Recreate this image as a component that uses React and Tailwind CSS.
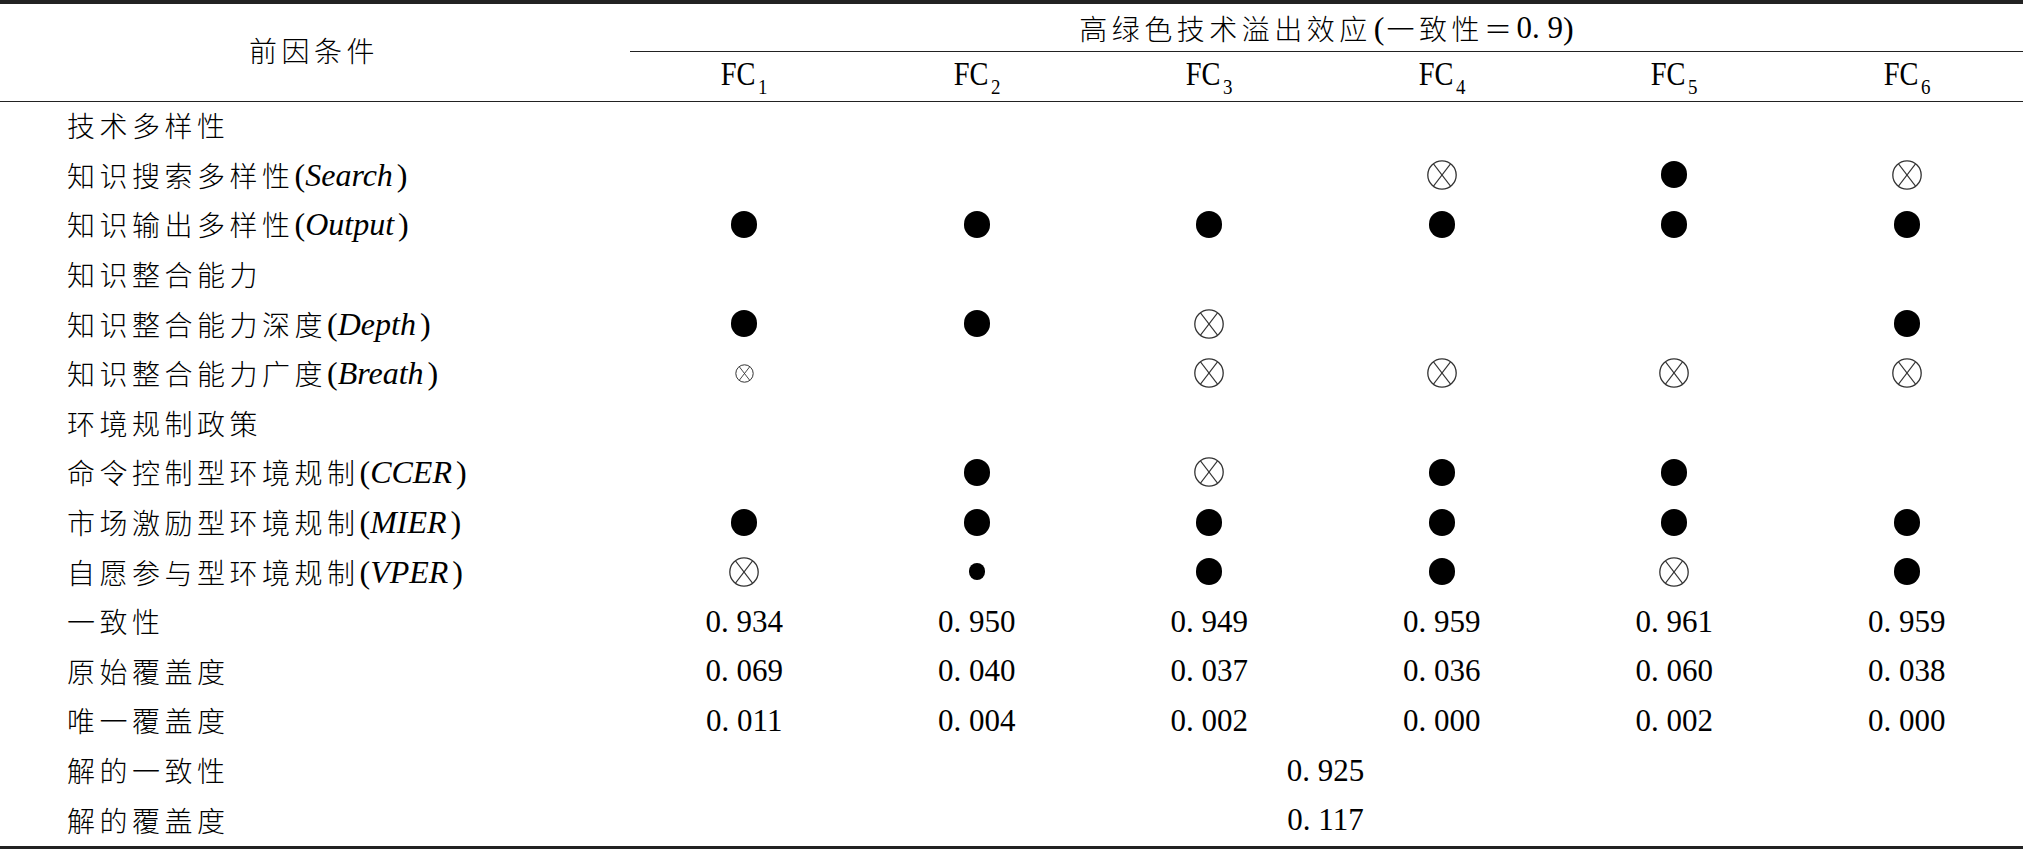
import React from "react";

const C = ({ children }) => (
  <span className="font-['Noto_Sans_CJK_SC',sans-serif] font-light text-[28px] tracking-[4.5px]">{children}</span>
);
const P = ({ children, cls = "" }) => (
  <span className={"font-['Liberation_Serif',serif] text-[32px] " + cls}>{children}</span>
);
const E = ({ children }) => (
  <span className="font-['Liberation_Serif',serif] text-[32px] italic">{children}</span>
);
const Num = ({ v }) => {
  const [a, b] = v.split(".");
  return (
    <span className="font-['Liberation_Serif',serif] text-[31px] leading-none">
      {a}
      <span className="inline-block w-[15.5px]">.</span>
      {b}
    </span>
  );
};

const Filled = ({ small }) =>
  small ? (
    <span className="inline-block w-[16px] h-[17px] rounded-full bg-black" />
  ) : (
    <span className="inline-block w-[26px] h-[27px] rounded-full bg-black" />
  );

const Cross = ({ small }) => {
  const s = small ? 19 : 30;
  const r = s / 2 - 0.8;
  const c = s / 2;
  const dx = r * 0.6;
  const dy = r * 0.78;
  return (
    <svg width={s} height={s} viewBox={`0 0 ${s} ${s}`} className="block">
      <ellipse cx={c} cy={c} rx={r} ry={r} fill="none" stroke="#333" strokeWidth={small ? 1 : 1.3} />
      <line x1={c - dx} y1={c - dy} x2={c + dx} y2={c + dy} stroke="#333" strokeWidth={small ? 0.9 : 1.1} />
      <line x1={c + dx} y1={c - dy} x2={c - dx} y2={c + dy} stroke="#333" strokeWidth={small ? 0.9 : 1.1} />
    </svg>
  );
};

const sym = (k) => {
  if (k === "f") return <Filled />;
  if (k === "fs") return <Filled small />;
  if (k === "x") return <Cross />;
  if (k === "xs") return <Cross small />;
  return null;
};

const Label = ({ zh, en }) => (
  <>
    <C>{zh}</C>
    {en && (
      <>
        <P>(</P>
        <E>{en}</E>
        <P cls="ml-[4px]">)</P>
      </>
    )}
  </>
);

const rows = [
  { zh: "技术多样性" },
  { zh: "知识搜索多样性", en: "Search", s: ["", "", "", "x", "f", "x"] },
  { zh: "知识输出多样性", en: "Output", s: ["f", "f", "f", "f", "f", "f"] },
  { zh: "知识整合能力" },
  { zh: "知识整合能力深度", en: "Depth", s: ["f", "f", "x", "", "", "f"] },
  { zh: "知识整合能力广度", en: "Breath", s: ["xs", "", "x", "x", "x", "x"] },
  { zh: "环境规制政策" },
  { zh: "命令控制型环境规制", en: "CCER", s: ["", "f", "x", "f", "f", ""] },
  { zh: "市场激励型环境规制", en: "MIER", s: ["f", "f", "f", "f", "f", "f"] },
  { zh: "自愿参与型环境规制", en: "VPER", s: ["x", "fs", "f", "f", "x", "f"] },
  { zh: "一致性", n: ["0.934", "0.950", "0.949", "0.959", "0.961", "0.959"] },
  { zh: "原始覆盖度", n: ["0.069", "0.040", "0.037", "0.036", "0.060", "0.038"] },
  { zh: "唯一覆盖度", n: ["0.011", "0.004", "0.002", "0.000", "0.002", "0.000"] },
  { zh: "解的一致性", span: "0.925" },
  { zh: "解的覆盖度", span: "0.117" },
];

export default function App() {
  return (
    <div className="w-[2023px] h-[849px] bg-white text-black border-t-4 border-b-[3px] border-[#222] overflow-hidden">
      <div className="grid grid-cols-[628px_repeat(6,minmax(0,1fr))] grid-rows-[48px_49px] border-b border-[#222]">
        <div className="row-span-2 flex items-center justify-center pb-[6px]">
          <C>前因条件</C>
        </div>
        <div className="col-span-6 ml-[2px] border-b border-[#222] flex items-center justify-center">
          <C>高绿色技术溢出效应</C>
          <P cls="mx-[2px]">(</P>
          <C>一致性＝</C>
          <Num v="0.9" />
          <P>)</P>
        </div>
        {[1, 2, 3, 4, 5, 6].map((i) => (
          <div key={i} className="flex items-center justify-center pb-[4px]">
            <span className="inline-block scale-x-[0.86] font-['Liberation_Serif',serif] text-[33px] leading-none">
              FC<sub className="text-[22px] ml-[3px] -bottom-[9px]">{i}</sub>
            </span>
          </div>
        ))}
      </div>
      <div className="grid grid-cols-[628px_repeat(6,minmax(0,1fr))] grid-rows-[repeat(15,49.6px)]">
        {rows.map((r, ri) => (
          <React.Fragment key={ri}>
            <div className="flex items-center pl-[67px] pb-[3px] whitespace-nowrap">
              <Label zh={r.zh} en={r.en} />
            </div>
            {r.span ? (
              <div className="col-span-6 flex items-center justify-center pb-[3px]">
                <Num v={r.span} />
              </div>
            ) : (
              [0, 1, 2, 3, 4, 5].map((ci) => (
                <div key={ci} className="flex items-center justify-center pb-[3px]">
                  {r.s ? sym(r.s[ci]) : r.n ? <Num v={r.n[ci]} /> : null}
                </div>
              ))
            )}
          </React.Fragment>
        ))}
      </div>
    </div>
  );
}
